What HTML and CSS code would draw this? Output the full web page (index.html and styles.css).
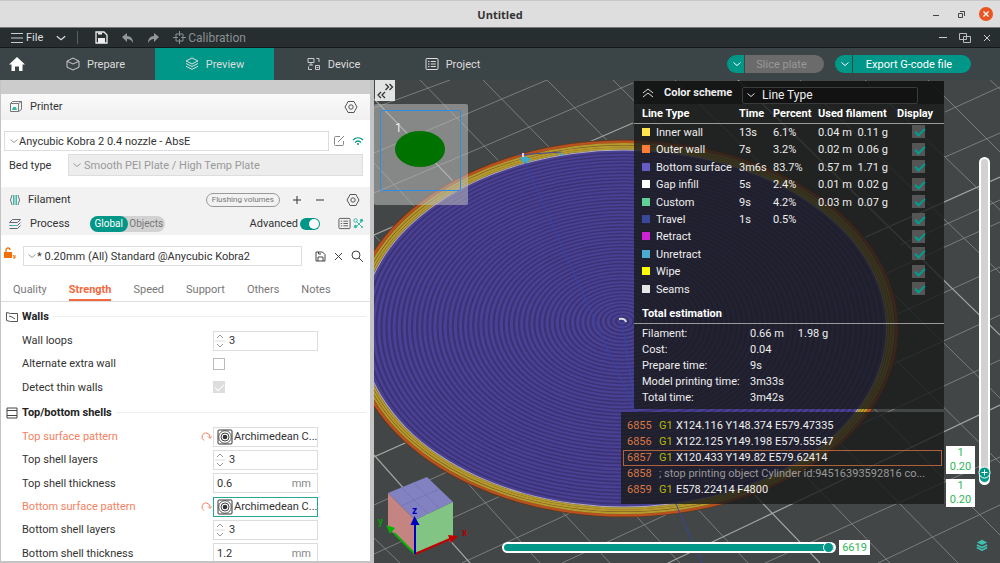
FILE: index.html
```html
<!DOCTYPE html>
<html lang="en">
<head>
    <meta charset="UTF-8">
    <meta name="viewport" content="width=device-width, initial-scale=1.0">
    <title>Untitled</title>
    <link rel="stylesheet" href="styles.css">
</head>
<body>

<!-- Shared icons -->
<svg class="defs" width="0" height="0">
    <symbol id="chevron" viewBox="0 0 10 10"><path d="M1.5 3.500L5 6.500l3.500-3" fill="none" stroke="currentColor"/></symbol>
    <symbol id="gear" viewBox="0 0 14 14"><path d="M4 1.500h6L11 3.500l2 3.500-2 3.500-1 2H4l-1-2L1 7l2-3.500z" fill="none" stroke="currentColor"/><circle cx="7" cy="7" r="2.200" fill="none" stroke="currentColor"/></symbol>
    <symbol id="layers" viewBox="0 0 14 14"><path d="M7 1l6 3-6 3-6-3zM1 6.500l6 3 6-3M1 9.300l6 3 6-3" fill="none" stroke="currentColor"/></symbol>
    <symbol id="list" viewBox="0 0 14 14"><rect x="1" y="1.500" width="12" height="11" rx="1" fill="none" stroke="currentColor"/><path d="M3 4.500h1.500M3 7h1.500M3 9.500h1.500M5.800 4.500h5M5.800 7h5M5.800 9.500h5" stroke="currentColor"/></symbol>
    <symbol id="pattern" viewBox="0 0 16 16"><rect x="1" y="1" width="14" height="14" rx="1" fill="#fff" stroke="#333"/><circle cx="8" cy="8" r="6.300" fill="none" stroke="#555"/><circle cx="8" cy="8" r="4" fill="none" stroke="#444"/><circle cx="8" cy="8" r="2.300" fill="#333"/></symbol>
    <symbol id="reset" viewBox="0 0 12 12"><path d="M4 9.500A4 4 0 1 1 10 6.500M8 5.500l2 2 1.500-2.200" fill="none" stroke="currentColor"/></symbol>
    <symbol id="spin" viewBox="0 0 10 16"><path d="M2 5l3-3 3 3M2 11l3 3 3-3" fill="none" stroke="#999"/><path d="M0 8h10" stroke="#ddd"/></symbol>
</svg>

<div class="app">
    <header class="titlebar">
        <h1>Untitled</h1>
        <div class="window-buttons">
            <button aria-label="Minimize"><svg width="14" height="14"><path d="M4 8.500h6" stroke="#444"/></svg></button>
            <button aria-label="Restore"><svg width="14" height="14"><path d="M4.500 6.500h4v4h-4zM6 4.500h4.500V9" fill="none" stroke="#444"/></svg></button>
            <button aria-label="Close"><svg width="14" height="14"><circle cx="7" cy="7" r="7" fill="#e95420"/><path d="M4.500 4.500l5 5M9.500 4.500l-5 5" stroke="#fff" stroke-width="1.300"/></svg></button>
        </div>
    </header>

    <nav class="menubar">
        <button class="file"><svg width="13" height="12"><path d="M0 1.500h12M0 6h12M0 10.500h12" stroke="#ccc"/></svg>File</button>
        <button class="drop" aria-label="More"><svg width="12" height="12"><use href="#chevron"/></svg></button>
        <span class="sep"></span>
        <button aria-label="Save"><svg width="13" height="13"><path d="M1 1h8l3 3v8H1z" fill="none" stroke="#eee" stroke-width="1.300"/><path d="M3 7h7v5H3zM3 1.500h4v2H3z" fill="#eee"/></svg></button>
        <button aria-label="Undo"><svg width="13" height="12"><path d="M1 5l5-4v3c4 0 6 3 6 7C10 8 9 7 6 7v3z" fill="#929899"/></svg></button>
        <button aria-label="Redo"><svg width="13" height="12"><path d="M12 5L7 1v3C3 4 1 7 1 11c2-3 3-4 6-4v3z" fill="#929899"/></svg></button>
        <button class="calibration"><svg width="13" height="13"><path d="M3 3h7v7H3zM6.500 0v5M6.500 8v5M0 6.500h5M8 6.500h5" fill="none" stroke="#8a9091"/></svg>Calibration</button>
        <div class="frame-buttons">
            <button aria-label="Minimize"><svg width="12" height="12"><path d="M2 5.500h8" stroke="#ccc"/></svg></button>
            <button aria-label="Restore"><svg width="12" height="12"><path d="M.5 1.500h7v6h-7zM4.500 4.500h7v6h-7z" fill="none" stroke="#bbb"/></svg></button>
            <button aria-label="Close"><svg width="12" height="12"><path d="M3 3l6 6M9 3l-6 6" stroke="#ccc"/></svg></button>
        </div>
    </nav>

    <nav class="tabs">
        <button class="home" aria-label="Home"><svg width="16" height="16"><path d="M8 1L0 8.500h2.500V15H6v-4.500h4V15h3.500V8.500H16z" fill="#fff"/></svg></button>
        <button class="tab"><svg width="14" height="14"><path d="M7 1l6 3.200v6L7 13l-6-2.800v-6zM1 4.200L7 7l6-2.800" fill="none" stroke="#ccc"/></svg>Prepare</button>
        <button class="tab active"><svg width="14" height="14"><use href="#layers"/></svg>Preview</button>
        <button class="tab"><svg width="14" height="14"><path d="M1 1.500h6v4H1zM4 5.500V8M2 8h4M8.500 8.500h4v4h-4zM9.500 1.500H12V5M1.500 9.500v3H5M9.500 10.500h2" fill="none" stroke="#ccc"/></svg>Device</button>
        <button class="tab"><svg width="14" height="14"><use href="#list"/></svg>Project</button>
        <div class="actions">
            <div class="split disabled">
                <button aria-label="Slice options"><svg width="10" height="10"><use href="#chevron"/></svg></button>
                <button class="label" disabled>Slice plate</button>
            </div>
            <div class="split export">
                <button aria-label="Export options"><svg width="10" height="10"><use href="#chevron"/></svg></button>
                <button class="label">Export G-code file</button>
            </div>
        </div>
    </nav>

    <main>
        <aside class="sidebar">
            <div class="panel-head printer-head">
                <svg width="14" height="14"><path d="M1.500 3.500h8v8h-8zM1.500 3.500l2-2h9v8l-3 2M9.500 3.500l3-2" fill="none" stroke="#777"/><path d="M3 10l1-3h3l1 3z" fill="#3cb8a8"/></svg>
                <h2>Printer</h2>
                <button class="end" aria-label="Printer settings"><svg width="14" height="14"><use href="#gear"/></svg></button>
            </div>

            <div class="printer-row">
                <div class="combo">
                    <svg width="10" height="10"><use href="#chevron"/></svg>
                    <select aria-label="Printer"><option>Anycubic Kobra 2 0.4 nozzle - AbsE</option></select>
                </div>
                <button aria-label="Edit printer"><svg width="12" height="12"><path d="M7 1.500H2.500a1 1 0 0 0-1 1v7a1 1 0 0 0 1 1h7a1 1 0 0 0 1-1V6M5 7l6-6" fill="none" stroke="#888"/></svg></button>
                <button aria-label="Connection"><svg width="12" height="12"><path d="M1 5c3-3 7-3 10 0M3 7.500c2-2 4-2 6 0" fill="none" stroke="#009688" stroke-width="1.200"/><circle cx="6" cy="9" r="1" fill="#009688"/></svg></button>
            </div>
            <div class="bed-row">
                <label for="bed">Bed type</label>
                <div class="combo disabled">
                    <svg width="10" height="10"><use href="#chevron"/></svg>
                    <select id="bed" disabled><option>Smooth PEI Plate / High Temp Plate</option></select>
                </div>
            </div>

            <div class="panel-head">
                <svg width="12" height="12"><path d="M3 1Q0 6 3 11M9 1q3 5 0 10" fill="none" stroke="#777"/><path d="M4.500 1v10M6 1v10M7.500 1v10" stroke="#3cb8a8"/></svg>
                <h2>Filament</h2>
                <button class="flush end">Flushing volumes</button>
                <button class="plus" aria-label="Add filament"><svg width="10" height="10"><path d="M1 5h8M5 1v8" stroke="#333"/></svg></button>
                <button class="minus" aria-label="Remove filament"><svg width="10" height="10"><path d="M1 5h8" stroke="#333"/></svg></button>
                <button aria-label="Filament settings"><svg width="14" height="14"><use href="#gear"/></svg></button>
            </div>
            <div class="panel-head process-head">
                <svg width="12" height="12"><path d="M3.500 1.500h8l-3 3h-8zM11.500 4.500l-3 3h-8M11.500 7.500l-3 3h-8" fill="none" stroke="#667"/><path d="M2 7.500h6" stroke="#3cb8a8"/></svg>
                <h2>Process</h2>
                <div class="scope">
                    <button class="on">Global</button><button>Objects</button>
                </div>
                <label class="end" for="advanced">Advanced</label>
                <input class="switch" id="advanced" type="checkbox" checked>
                <button aria-label="Parameter list"><svg width="13" height="13"><use href="#list"/></svg></button>
                <button aria-label="Compare presets"><svg width="11" height="11"><path d="M3 3l6 6M9 3L3 9" stroke="#3cb8a8"/><circle cx="2.500" cy="2.500" r="1.700" fill="none" stroke="#3cb8a8"/><circle cx="8.500" cy="2.500" r="1.700" fill="#3cb8a8"/><circle cx="2.500" cy="8.500" r="1.700" fill="#3cb8a8"/><circle cx="9" cy="9" r="1" fill="#3cb8a8"/></svg></button>
            </div>

            <div class="preset-row">
                <svg width="14" height="20"><path d="M0 6h8v6H0z" fill="#f2700c"/><path d="M2 6V4a2 2 0 0 1 4 0" fill="none" stroke="#f2700c" stroke-width="1.300"/><path d="M9 9l2 3M11 9v3h-2" stroke="#f2700c" fill="none"/></svg>
                <div class="combo">
                    <svg width="10" height="10"><use href="#chevron"/></svg>
                    <select aria-label="Process preset"><option>* 0.20mm (All) Standard @Anycubic Kobra2</option></select>
                </div>
                <button aria-label="Save preset"><svg width="11" height="11"><path d="M1 1h6.500L10 3.500V10H1zM3 10V6h5v4M3.500 1v2H6" fill="none" stroke="#444"/></svg></button>
                <button aria-label="Delete preset"><svg width="11" height="11"><path d="M2 2l7 7M9 2L2 9" stroke="#444"/></svg></button>
                <button aria-label="Search"><svg width="12" height="12"><circle cx="5" cy="5" r="4" fill="none" stroke="#444"/><path d="M8 8l4 4" stroke="#444"/></svg></button>
            </div>

            <div class="pages">
                <button>Quality</button>
                <button class="active">Strength</button>
                <button>Speed</button>
                <button>Support</button>
                <button>Others</button>
                <button>Notes</button>
            </div>

            <h3><svg width="12" height="12"><path d="M.5 1.500l4 1h7v8h-7l-4-1zM3 5l3 1 3 2" fill="none" stroke="#555"/></svg>Walls</h3>
            <div class="fields walls">
                <div class="field">
                    <label for="loops">Wall loops</label>
                    <div class="box"><svg width="10" height="16"><use href="#spin"/></svg><input id="loops" value="3"></div>
                </div>
                <div class="field">
                    <label for="extra">Alternate extra wall</label>
                    <input class="tick" id="extra" type="checkbox">
                </div>
                <div class="field">
                    <label for="thin">Detect thin walls</label>
                    <input class="tick" id="thin" type="checkbox" checked disabled>
                </div>
            </div>

            <h3><svg width="12" height="12"><path d="M1 1h10v10H1zM1 3.500h10M1 8.500h10" fill="none" stroke="#444"/></svg>Top/bottom shells</h3>
            <div class="fields shells">
                <div class="field changed">
                    <label for="topPattern">Top surface pattern</label>
                    <button aria-label="Reset top surface pattern"><svg width="12" height="12"><use href="#reset"/></svg></button>
                    <div class="box"><svg width="16" height="16"><use href="#pattern"/></svg><select id="topPattern"><option>Archimedean C...</option></select></div>
                </div>
                <div class="field">
                    <label for="topLayers">Top shell layers</label>
                    <div class="box"><svg width="10" height="16"><use href="#spin"/></svg><input id="topLayers" value="3"></div>
                </div>
                <div class="field">
                    <label for="topThick">Top shell thickness</label>
                    <div class="box"><input id="topThick" value="0.6"><span>mm</span></div>
                </div>
                <div class="field changed">
                    <label for="bottomPattern">Bottom surface pattern</label>
                    <button aria-label="Reset bottom surface pattern"><svg width="12" height="12"><use href="#reset"/></svg></button>
                    <div class="box focused"><svg width="16" height="16"><use href="#pattern"/></svg><select id="bottomPattern"><option>Archimedean C...</option></select></div>
                </div>
                <div class="field">
                    <label for="bottomLayers">Bottom shell layers</label>
                    <div class="box"><svg width="10" height="16"><use href="#spin"/></svg><input id="bottomLayers" value="3"></div>
                </div>
                <div class="field">
                    <label for="bottomThick">Bottom shell thickness</label>
                    <div class="box"><input id="bottomThick" value="1.2"><span>mm</span></div>
                </div>
            </div>
        </aside>

        <section class="viewport">
            <svg class="scene" viewBox="374 80 626 483" preserveAspectRatio="xMinYMin slice">
                <!-- Bed grid -->
                <g stroke="#7b7d7b" stroke-width="1">
                    <path d="M990 80l10 9M928 80l72 72M865 80l135 130M800 80l200 193M675 80l325 318M613 80l387 383M547 80l453 455M483 80l475 483M420 80l470 483M374 163l374 400M374 235l306 328M374 310l236 253M374 380l166 183M374 538l26 25"/>
                    <path d="M374 108l76-28M374 153l173-73M374 193l259-110M374 505l626-283M374 554l626-287M462 563l538-248M562 563l438-203M765 563l235-106M878 563l122-58M945 112l55-25M945 157l55-24M900 245l100-45"/>
                </g>
                <path d="M738 80l262 255M374 99l446 464M374 455l96 108M374 235l259-112M374 457l626-280M668 563l332-158" stroke="#a2a4a0" stroke-width="1.200"/>

                <!-- Walls -->
                <ellipse cx="624" cy="328.500" rx="275" ry="189" fill="#5a3a24"/>
                <ellipse cx="624" cy="328.500" rx="274" ry="188" fill="#b9511f"/>
                <ellipse cx="624" cy="328.500" rx="271" ry="185.500" fill="#6a4a24"/>
                <g fill="none" stroke="#b59b2e" stroke-width="2">
                    <ellipse cx="624" cy="328.500" rx="269.500" ry="184.500"/>
                    <ellipse cx="624" cy="328.500" rx="267" ry="182"/>
                    <ellipse cx="624" cy="328.500" rx="264.500" ry="180"/>
                </g>
                <ellipse cx="624" cy="328.500" rx="263" ry="179" fill="#b3b0bb"/>
                <g id="rings"></g>

                <!-- Travel moves -->
                <path d="M523 158L702 563M622 322L636 410" stroke="#3346a5" stroke-width="1" fill="none"/>
                <path d="M517 155l44-3" stroke="#4646a0"/>
                <path d="M520 158l5-2 6 3-4 4-5-1z" fill="#43aacb"/>
                <path d="M558 153l6 1-3 2z" fill="#43aacb"/>
                <path d="M523 153v4" stroke="#e8d0e8" stroke-width="2"/>
                <path d="M619 319q6-1 7 3" stroke="#ddd" stroke-width="2" fill="none"/>

                <!-- Orientation cube -->
                <path d="M388 493l39-16 26 25-38 18z" fill="#8282c2"/>
                <path d="M388 493l27 27v34l-27-26z" fill="#c48482"/>
                <path d="M415 520l38-18v35l-38 17z" fill="#82c484"/>
                <path d="M401 487l27 27M413 482l26 26M401 506l38-17" stroke="#7676b4" fill="none"/>
                <path d="M415 554l35-15" stroke="#c00000" stroke-width="2"/>
                <path d="M448 535l10 1-7 7z" fill="#c00000"/>
                <path d="M415 554l-21-21" stroke="#00b400" stroke-width="2"/>
                <path d="M386 525l9 3-5 6z" fill="#00b400"/>
                <path d="M415 554v-32" stroke="#0000c0" stroke-width="2"/>
                <path d="M414.500 516l5 9h-9z" fill="#0000c0"/>
                <text x="462" y="536" fill="#b00000">x</text>
                <text x="378" y="525" fill="#00a000">y</text>
                <text x="412" y="514" fill="#0000c0">z</text>
            </svg>

            <button class="collapse" aria-label="Collapse sidebar"><svg width="20" height="20"><path d="M10.500 3l3 3-3 3M14.500 3l3 3-3 3M6 11l-3 3 3 3M10 11l-3 3 3 3" fill="none" stroke="#333" stroke-width="1.300"/></svg></button>

            <div class="plate">
                <div class="plate-inner">
                    <span>1</span>
                    <svg width="50" height="36"><ellipse cx="25" cy="18" rx="25" ry="18" fill="#007200"/></svg>
                </div>
            </div>

            <div class="legend">
                <div class="legend-head">
                    <button aria-label="Fold legend"><svg width="12" height="12"><path d="M1 6l5-4 5 4M1 10l5-4 5 4" fill="none" stroke="#ddd"/></svg></button>
                    <label for="scheme">Color scheme</label>
                    <div class="combo">
                        <svg width="10" height="10"><use href="#chevron"/></svg>
                        <select id="scheme"><option>Line Type</option></select>
                    </div>
                </div>
                <table class="lines">
                    <thead>
                        <tr><th class="c-name">Line Type</th><th class="c-time">Time</th><th class="c-percent">Percent</th><th colspan="2" class="c-used">Used filament</th><th class="c-display">Display</th></tr>
                    </thead>
                    <tbody>
                        <tr><td><i class="inner"></i>Inner wall</td><td>13s</td><td>6.1%</td><td class="c-m">0.04 m</td><td>0.11 g</td><td><input type="checkbox" aria-label="Inner wall" checked></td></tr>
                        <tr><td><i class="outer"></i>Outer wall</td><td>7s</td><td>3.2%</td><td>0.02 m</td><td>0.06 g</td><td><input type="checkbox" aria-label="Outer wall" checked></td></tr>
                        <tr><td><i class="bottom"></i>Bottom surface</td><td>3m6s</td><td>83.7%</td><td>0.57 m</td><td>1.71 g</td><td><input type="checkbox" aria-label="Bottom surface" checked></td></tr>
                        <tr><td><i class="gap"></i>Gap infill</td><td>5s</td><td>2.4%</td><td>0.01 m</td><td>0.02 g</td><td><input type="checkbox" aria-label="Gap infill" checked></td></tr>
                        <tr><td><i class="custom"></i>Custom</td><td>9s</td><td>4.2%</td><td>0.03 m</td><td>0.07 g</td><td><input type="checkbox" aria-label="Custom" checked></td></tr>
                        <tr><td><i class="travel"></i>Travel</td><td>1s</td><td>0.5%</td><td></td><td></td><td><input type="checkbox" aria-label="Travel" checked></td></tr>
                        <tr><td><i class="retract"></i>Retract</td><td></td><td></td><td></td><td></td><td><input type="checkbox" aria-label="Retract" checked></td></tr>
                        <tr><td><i class="unretract"></i>Unretract</td><td></td><td></td><td></td><td></td><td><input type="checkbox" aria-label="Unretract" checked></td></tr>
                        <tr><td><i class="wipe"></i>Wipe</td><td></td><td></td><td></td><td></td><td><input type="checkbox" aria-label="Wipe" checked></td></tr>
                        <tr><td><i class="seams"></i>Seams</td><td></td><td></td><td></td><td></td><td><input type="checkbox" aria-label="Seams" checked></td></tr>
                    </tbody>
                </table>
                <h2>Total estimation</h2>
                <dl>
                    <dt>Filament:</dt><dd><span>0.66 m</span><span>1.98 g</span></dd>
                    <dt>Cost:</dt><dd>0.04</dd>
                    <dt>Prepare time:</dt><dd>9s</dd>
                    <dt>Model printing time:</dt><dd>3m33s</dd>
                    <dt>Total time:</dt><dd>3m42s</dd>
                </dl>
            </div>

            <ol class="gcode">
                <li><b>6855</b><em>G1</em>X124.116 Y148.374 E579.47335</li>
                <li><b>6856</b><em>G1</em>X122.125 Y149.198 E579.55547</li>
                <li class="current"><b>6857</b><em>G1</em>X120.433 Y149.82 E579.62414</li>
                <li class="comment"><b>6858</b>; stop printing object Cylinder id:94516393592816 co...</li>
                <li><b>6859</b><em>G1</em>E578.22414 F4800</li>
            </ol>

            <div class="layer-slider">
                <input type="range" min="0" max="100" value="0" aria-label="Layer">
                <svg class="upper-thumb" width="13" height="13"><circle cx="6.500" cy="6.500" r="5.500" fill="#009688" stroke="#fff"/><path d="M3.500 6.500h6M6.500 3.500v6" stroke="#fff"/></svg>
            </div>
            <div class="layer-labels">
                <output>1<br>0.20</output>
                <output>1<br>0.20</output>
            </div>

            <div class="move-slider">
                <input type="range" min="0" max="6619" value="6619" aria-label="Move">
                <output>6619</output>
            </div>

            <button class="layer-view" aria-label="Layers"><svg width="12" height="12" viewBox="0 0 14 14"><path d="M7 1l6 3-6 3-6-3z" fill="#3cc0b0"/><path d="M1 7l6 3 6-3M1 10l6 3 6-3" fill="none" stroke="#3cc0b0" stroke-width="2"/></svg></button>
        </section>
    </main>
</div>

<script>
    // Concentric bottom surface: alternate light and dark rings towards the seam point
    const rings = document.getElementById('rings');
    const count = 51;
    for (let i = count; i > 0; i--) {
        [[i, '#4a4094'], [i - 0.6, '#3a3273']].forEach(([n, color]) => {
            const t = n / count;
            const ring = document.createElementNS('http://www.w3.org/2000/svg', 'ellipse');
            ring.setAttribute('cx', 622 + 2 * t);
            ring.setAttribute('cy', 321 + 7.5 * t);
            ring.setAttribute('rx', 262 * t);
            ring.setAttribute('ry', 178 * t);
            ring.setAttribute('fill', color);
            rings.appendChild(ring);
        });
    }
</script>
</body>
</html>
```
FILE: styles.css
```css
* {
    box-sizing: border-box;
}

body {
    margin: 0;
    font-family: Roboto, "Liberation Sans", sans-serif;
    font-size: 11px;
    color: #333;
}

button, input, select {
    font: inherit;
    color: inherit;
    background: none;
    border: none;
    padding: 0;
    margin: 0;
}

button {
    display: flex;
    align-items: center;
    cursor: pointer;
}

select {
    appearance: none;
    width: 100%;
    min-width: 0;
    opacity: 1;
    outline: none;
}

h1, h2, h3, dl, dd, ol {
    margin: 0;
    padding: 0;
}

svg {
    display: block;
    flex: none;
}

.defs {
    position: absolute;
}

.app {
    display: grid;
    grid-template-rows: 28px 20px 32px 1fr;
    height: 100vh;
    overflow: hidden;
}

/* Title bar */
.titlebar {
    display: grid;
    grid-template-columns: 1fr auto 1fr;
    align-items: center;
    background: #dedede;
    border-top: 1px solid #c8c8c8;
    border-bottom: 1px solid #777;
}

.titlebar h1 {
    grid-column: 2;
    font-family: "Open Sans", sans-serif;
    font-size: 11px;
}

.window-buttons {
    display: flex;
    justify-content: flex-end;
    gap: 11px;
    padding-right: 7px;
}

/* Menu bar */
.menubar {
    display: flex;
    align-items: center;
    background: #262e30;
    color: #ddd;
    border-bottom: 1px solid #14191a;
    padding-left: 11px;
}

.menubar button {
    margin-right: 13px;
}

.menubar .file {
    gap: 2px;
    margin-right: 12px;
}

.menubar .drop {
    margin-right: 10px;
}

.sep {
    width: 1px;
    height: 13px;
    background: #5a6061;
    margin-right: 17px;
}

.menubar .calibration {
    gap: 2px;
    color: #8a9091;
    font-size: 12px;
}

.frame-buttons {
    display: flex;
    margin-left: auto;
    gap: 10px;
    padding-right: 7px;
}

.menubar .frame-buttons button {
    margin: 0;
}

/* Main tabs */
.tabs {
    display: flex;
    background: #3b4446;
    color: #ddd;
}

.home {
    width: 36px;
    padding-left: 9px;
}

.tab {
    width: 119px;
    justify-content: center;
    gap: 7px;
}

.tab.active {
    background: #009688;
}

.actions {
    display: flex;
    align-items: center;
    gap: 11px;
    margin-left: auto;
    padding-right: 29px;
}

.split {
    display: flex;
    gap: 1px;
    height: 18px;
    border-radius: 9px;
    overflow: hidden;
    color: #fff;
}

.split button {
    width: 17px;
    padding-left: 5px;
    background: #009688;
}

.split .label {
    width: 118px;
    justify-content: center;
    padding: 0 6px 0 0;
}

.split.disabled .label {
    width: 79px;
    background: #6b6b6b;
    color: #999;
}

/* Sidebar */
main {
    display: grid;
    grid-template-columns: 374px 1fr;
    min-height: 0;
}

.sidebar {
    background: #fff;
    border: solid #c4c4c4;
    border-width: 0 4px 2px 1px;
    overflow: hidden;
}

.panel-head {
    display: flex;
    align-items: center;
    height: 25px;
    padding: 0 10px 0 8px;
    background: #f2f2f2;
}

.panel-head h2 {
    font-size: 11px;
    font-weight: normal;
    margin-left: 7px;
}

.panel-head .end {
    margin-left: auto;
}

.printer-head {
    height: 40px;
    padding: 0 12px 1px 8px;
    border-top: 14px solid #ccc;
    background: linear-gradient(#fafafa, #f0f0f0);
}

.process-head {
    height: 23px;
    padding-right: 6px;
    gap: 2px;
}

.panel-head button {
    color: #555;
}

.panel-head .flush {
    height: 14px;
    padding: 0 5px;
    margin-right: 12px;
    border: 1px solid #999;
    border-radius: 7px;
    font-size: 8px;
    color: #777;
}

.plus {
    margin-right: 13px;
}

.minus {
    margin-right: 21px;
}

.scope {
    display: flex;
    height: 16px;
    margin-left: 18px;
    border-radius: 8px;
    background: #d2d2d2;
}

.panel-head .scope button {
    width: 37px;
    justify-content: center;
    font-size: 10px;
    color: #777;
}

.panel-head .scope .on {
    width: 38px;
    border-radius: 8px;
    background: #009688;
    color: #fff;
}

.switch {
    appearance: none;
    display: flex;
    justify-content: flex-end;
    width: 20px;
    height: 12px;
    padding: 1px;
    margin-right: 16px;
    border-radius: 6px;
    background: #009688;
}

.switch::after {
    content: "";
    width: 10px;
    height: 10px;
    border-radius: 5px;
    background: #fff;
}

.combo {
    display: flex;
    flex: 1;
    align-items: center;
    height: 20px;
    padding-left: 3px;
    border: 1px solid #ddd;
}

.combo svg {
    color: #999;
}

.combo.disabled {
    height: 22px;
    gap: 2px;
    background: #ededed;
    color: #999;
}

.printer-row {
    display: flex;
    align-items: center;
    gap: 7px;
    padding: 11px 6px 3px 3px;
}

.printer-row .combo {
    margin-right: -3px;
    padding-left: 4px;
}

.bed-row {
    display: flex;
    align-items: center;
    padding: 0 7px 11px 8px;
}

.bed-row label {
    width: 59px;
}

.preset-row {
    display: flex;
    align-items: center;
    gap: 7px;
    padding: 11px 7px 12px 3px;
}

.preset-row .combo {
    margin: 0 6px 0 -2px;
}

.pages {
    display: flex;
    align-items: flex-end;
    gap: 22px;
    padding-left: 12px;
    border-bottom: 1px solid #ddd;
    margin-bottom: 2px;
    color: #777;
    height: 24px;
}

.pages button {
    height: 22px;
    border-bottom: 2px solid transparent;
}

.pages .active {
    color: #f4683e;
    border-color: #f4683e;
    font-weight: bold;
}

.sidebar h3 {
    display: flex;
    align-items: center;
    gap: 4px;
    height: 25px;
    padding: 0 4px 0 5px;
    font-size: 11px;
    color: #222;
}

.sidebar h3::after {
    content: "";
    flex: 1;
    height: 1px;
    background: #eee;
}

.fields {
    display: grid;
    grid-auto-rows: 1fr;
    padding-left: 21px;
}

.walls {
    height: 70px;
    margin-bottom: 1px;
}

.shells {
    height: 140px;
}

.field {
    display: grid;
    grid-template-columns: 178px 13px 105px;
    align-items: center;
}

.field .box, .field .tick {
    grid-column: 3;
}

.changed label, .changed button {
    color: #f4815f;
}

.box {
    display: flex;
    align-items: center;
    gap: 4px;
    height: 20px;
    padding: 0 6px 0 0;
    border: 1px solid #ddd;
}

.box.focused {
    border-color: #26a699;
}

.box svg {
    margin: 0 0 0 1px;
}

.box input {
    flex: 1;
    min-width: 0;
    width: 20px;
}

.box input:first-child {
    padding-left: 3px;
}

.box span {
    color: #888;
}

.changed .box {
    gap: 1px;
    padding: 0;
}

.changed .box svg {
    margin-left: 3px;
}

.tick {
    appearance: none;
    width: 12px;
    height: 12px;
    border: 1px solid #bbb;
}

.tick:disabled {
    background: #ddd;
    border-color: #ddd;
}

.tick:checked::after, .lines input::after {
    content: "";
    display: block;
    width: 8px;
    height: 4px;
    margin: 2px 0 0 1px;
    border: solid #fff;
    border-width: 0 0 1px 1px;
    transform: rotate(-45deg);
}

/* 3D view */
.viewport {
    position: relative;
    overflow: hidden;
    background: #434646;
    color: #eee;
}

.scene {
    width: 100%;
    height: 100%;
}

.scene text {
    font-size: 10px;
    font-weight: bold;
}

.collapse {
    position: absolute;
    left: 1px;
    top: 0;
    width: 20px;
    height: 21px;
    background: #e2e4e3;
}

.plate {
    position: absolute;
    left: 0;
    top: 24px;
    padding: 6px 7px 14px 6px;
    border-radius: 2px;
    background: rgba(190, 190, 190, 0.55);
}

.plate-inner {
    width: 81px;
    height: 81px;
    padding: 11px 14px;
    border: 1px solid #2d8ce6;
    border-radius: 2px;
    font-size: 12px;
    line-height: 12px;
}

.plate-inner svg {
    margin-top: -3px;
}

.legend {
    position: absolute;
    right: 56px;
    top: 1px;
    width: 310px;
    background: rgba(25, 26, 26, 0.8);
    padding-bottom: 3px;
}

.legend-head {
    display: flex;
    align-items: center;
    height: 23px;
    padding-left: 8px;
    background: rgba(10, 10, 10, 0.5);
    font-size: 12px;
    font-weight: bold;
}

.legend-head label {
    width: 78px;
    margin-left: 10px;
    font-size: 11px;
}

.legend-head .combo {
    flex: none;
    width: 176px;
    height: 17px;
    margin-top: 5px;
    border-color: #3a3b3d;
    border-radius: 2px;
    background: #121212;
    font-weight: normal;
    gap: 6px;
}

.legend-head .combo svg {
    color: #ddd;
}

.lines {
    width: 100%;
    height: 194px;
    table-layout: fixed;
    border-collapse: collapse;
    text-align: left;
}

.lines th {
    padding: 0;
    height: 19px;
    border-bottom: 1px solid #999;
    color: #fff;
    white-space: nowrap;
}

.lines td {
    padding: 0;
    white-space: nowrap;
}

.c-name {
    width: 105px;
}

.lines .c-name, .lines td:first-child {
    padding-left: 8px;
}

.c-time {
    width: 34px;
}

.c-percent {
    width: 45px;
}

.c-used {
    width: 79px;
}

.lines td:last-child {
    padding: 0 0 1px 15px;
}

.lines i {
    display: inline-block;
    width: 8px;
    height: 8px;
    margin-right: 6px;
}

.lines input {
    appearance: none;
    display: block;
    width: 13px;
    height: 13px;
    padding: 3px 0 0 3px;
    background: #555;
}

.lines input::after {
    margin: 0;
    border-color: #009e90;
    border-width: 0 0 2px 2px;
}

.inner { background: #ffe64d; }
.outer { background: #ff7d38; }
.bottom { background: #665cc7; }
.gap { background: #fff; }
.custom { background: #5ed194; }
.travel { background: #38489b; }
.retract { background: #cd22d6; }
.unretract { background: #49adcf; }
.wipe { background: #ff0; }
.seams { background: #e6e6e6; }

.legend h2 {
    padding: 8px 8px 2px;
    margin-bottom: 2px;
    border-bottom: 1px solid #999;
    font-size: 11px;
    line-height: 15px;
    color: #fff;
}

.legend dl {
    display: grid;
    grid-template-columns: 108px 1fr;
    padding-left: 8px;
    line-height: 16px;
}

.legend dd {
    display: flex;
    gap: 14px;
}

.gcode {
    position: absolute;
    right: 56px;
    top: 332px;
    width: 323px;
    padding: 6px 2px;
    list-style: none;
    background: rgba(25, 26, 26, 0.8);
    line-height: 14px;
}

.gcode li {
    padding: 0 3px;
    border: 1px solid transparent;
    white-space: nowrap;
    overflow: hidden;
}

.gcode .current {
    border-color: #b0603a;
}

.gcode b {
    display: inline-block;
    width: 32px;
    font-weight: normal;
    color: #d87842;
}

.gcode em {
    display: inline-block;
    width: 17px;
    font-style: normal;
    color: #b8b800;
}

.gcode .comment {
    color: #999;
}

/* Sliders */
input[type="range"] {
    appearance: none;
    display: block;
    border: 2px solid #fff;
    border-radius: 6px;
}

input[type="range"]::-webkit-slider-thumb {
    appearance: none;
    width: 11px;
    height: 11px;
    border: 1px solid #fff;
    border-radius: 6px;
    background: #009688;
}

.layer-slider {
    position: absolute;
    right: 10px;
    top: 77px;
}

.layer-slider input {
    writing-mode: vertical-lr;
    direction: rtl;
    width: 11px;
    height: 328px;
    background: #d2d2d2;
}

.upper-thumb {
    position: absolute;
    left: -1px;
    bottom: 6px;
}

.layer-labels {
    position: absolute;
    right: 25px;
    top: 366px;
    display: grid;
    gap: 5px;
}

output {
    display: block;
    background: #fff;
    color: #2fb65a;
    text-align: center;
}

.layer-labels output {
    width: 29px;
    line-height: 14px;
}

.move-slider {
    position: absolute;
    left: 128px;
    right: 130px;
    bottom: 10px;
    display: flex;
    align-items: center;
    gap: 3px;
    height: 11px;
}

.move-slider input {
    flex: 1;
    height: 11px;
    background: #009688;
}

.move-slider output {
    width: 31px;
    line-height: 15px;
}

.layer-view {
    position: absolute;
    right: 12px;
    bottom: 12px;
}
```
